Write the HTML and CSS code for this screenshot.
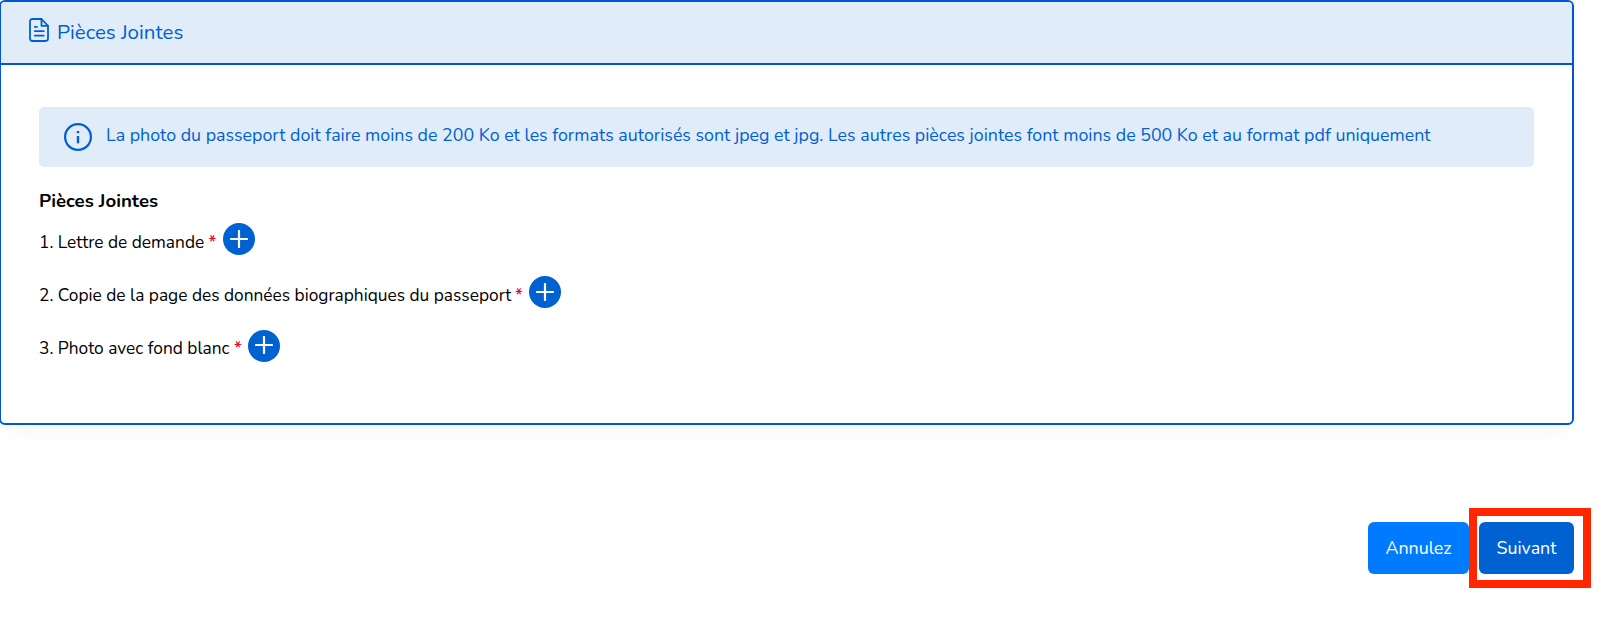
FILE: index.html
```
<!DOCTYPE html>
<html lang="fr">
<head>
    <meta charset="UTF-8">
    <meta name="viewport" content="width=device-width, initial-scale=1.0">
    <title>Pièces Jointes</title>
    <link rel="stylesheet" href="styles.css">
</head>
<body>
    <div class="card">
        <div class="card-header">
            <svg class="file-icon" viewBox="0 0 20 24" fill="none" stroke="currentColor" stroke-width="1.8" stroke-linejoin="round" stroke-linecap="round">
                <path d="M12.5 1H3.4A2.4 2.4 0 0 0 1 3.4v17.2A2.4 2.4 0 0 0 3.4 23h13.2a2.4 2.4 0 0 0 2.4-2.4V7.8z"/>
                <path d="M12.5 1v6.8H19M5.8 8.8H8M5.8 13.2h8.9M5.8 17.6h8.9"/>
            </svg>
            <span class="title">Pièces Jointes</span>
        </div>
        <div class="card-body">
            <div class="alert">
                <svg class="info-icon" viewBox="0 0 28 28" fill="none" stroke="currentColor">
                    <circle cx="14" cy="14" r="12.9" stroke-width="2.2"/>
                    <path d="M14 13v7.3" stroke-width="2.4"/>
                    <path d="M14 8v2.2" stroke-width="2.4"/>
                </svg>
                <span class="alert-text">La photo du passeport doit faire moins de 200 Ko et les formats autorisés sont jpeg et jpg. Les autres pièces jointes font moins de 500 Ko et au format pdf uniquement</span>
            </div>
            <h2>Pièces Jointes</h2>
            <ul class="files">
                <li>
                    <span class="label lettre">1. Lettre de demande</span><span class="required">*</span>
                    <button class="add-btn" aria-label="Ajouter"><svg viewBox="0 0 18 18"><path d="M9 1v16M1 9h16"/></svg></button>
                </li>
                <li>
                    <span class="label copie">2. Copie de la page des données biographiques du passeport</span><span class="required">*</span>
                    <button class="add-btn" aria-label="Ajouter"><svg viewBox="0 0 18 18"><path d="M9 1v16M1 9h16"/></svg></button>
                </li>
                <li>
                    <span class="label photo">3. Photo avec fond blanc</span><span class="required">*</span>
                    <button class="add-btn" aria-label="Ajouter"><svg viewBox="0 0 18 18"><path d="M9 1v16M1 9h16"/></svg></button>
                </li>
            </ul>
        </div>
    </div>
    <div class="actions">
        <button class="btn cancel">Annulez</button>
        <div class="next-wrap">
            <button class="btn next">Suivant</button>
            <div class="highlight"></div>
        </div>
    </div>
</body>
</html>
```
FILE: styles.css
```
* {
    box-sizing: border-box;
}
body {
    margin: 0;
    min-height: 100vh;
    font-family: Nunito, Lato, sans-serif;
    font-size: 17.32px;
    color: #000;
    background: #fff;
}
.card {
    width: 1575px;
    height: 425px;
    margin-left: -1px;
    border: 2px solid #0056d2;
    border-radius: 6px;
    box-shadow: 0 14px 20px -10px rgba(0, 0, 0, 0.05);
}
.card-header {
    display: flex;
    align-items: center;
    height: 63px;
    padding-left: 28px;
    border-bottom: 2px solid #0056d2;
    border-radius: 4px 4px 0 0;
    background: #e0ecf8;
    color: #005fd3;
}
.file-icon {
    width: 20px;
    height: 24px;
    margin: 0 8px 5px 0;
}
.title {
    padding-bottom: 1px;
    font-size: 20.5px;
    white-space: nowrap;
}
.card-body {
    padding: 42px 38px 0;
}
.alert {
    display: flex;
    align-items: center;
    height: 60px;
    padding-left: 25px;
    border-radius: 5px;
    background: #e0ecf8;
    color: #005fd3;
}
.info-icon {
    flex: none;
    width: 28px;
    height: 28px;
    margin-right: 14px;
}
.alert-text {
    padding-bottom: 4px;
    font-size: 17.82px;
    white-space: nowrap;
}
h2 {
    margin: 21px 0 0;
    font-size: 18.65px;
    line-height: 26px;
}
.files {
    list-style: none;
    margin: 9px 0 0;
    padding: 0;
}
.files li {
    display: flex;
    align-items: center;
    height: 32px;
    margin-bottom: 21.3px;
    white-space: nowrap;
}
.label,
.required {
    padding-top: 5px;
}
.lettre {
    width: 169.5px;
}
.copie {
    width: 476px;
}
.photo {
    width: 195px;
}
.required {
    width: 14px;
    color: #f5002d;
    font-weight: 600;
}
.add-btn {
    display: flex;
    align-items: center;
    justify-content: center;
    width: 32px;
    height: 32px;
    padding: 0 0 1px;
    border: none;
    border-radius: 50%;
    background: #0062d1;
    cursor: pointer;
}
.add-btn svg {
    width: 18px;
    height: 18px;
    fill: none;
    stroke: #fff;
    stroke-width: 2.2;
    stroke-linecap: round;
}
.actions {
    display: flex;
    justify-content: flex-end;
    gap: 10px;
    margin: 97px 26px 0 0;
}
.btn {
    display: block;
    height: 51.5px;
    padding: 0;
    border: none;
    border-radius: 6px;
    color: #fff;
    font-family: inherit;
    font-size: 17.85px;
    cursor: pointer;
}
.cancel {
    width: 101px;
    background: #007bff;
}
.next-wrap {
    position: relative;
}
.next {
    width: 95px;
    background: #0062d1;
}
/* red frame laid over the next button */
.highlight {
    position: absolute;
    top: -14px;
    left: -10px;
    width: 122px;
    height: 80px;
    border: 8px solid #ff2600;
    pointer-events: none;
}
```
